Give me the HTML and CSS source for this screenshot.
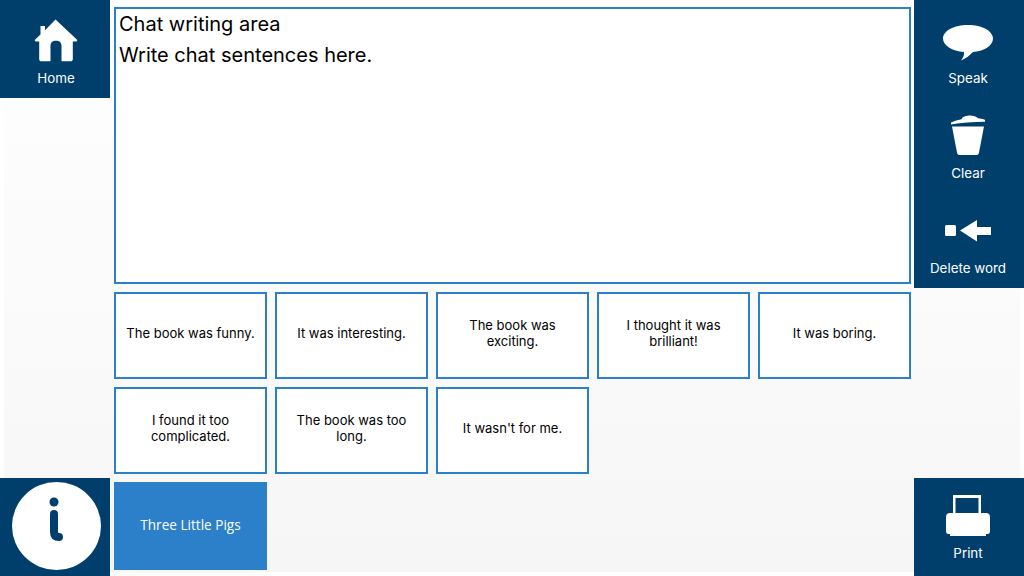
FILE: index.html
```html
<!DOCTYPE html>
<html lang="en">
<head>
<meta charset="utf-8">
<title>Chat writing area</title>
<link rel="stylesheet" href="styles.css">
</head>
<body>
<div class="app">
  <aside class="side side-left">
    <div class="tool tool-home">
      <svg class="icon" width="44" height="44" viewBox="0 0 44 44"><path fill="#fff" d="M21.500.5 42.800 20.500C43.600 21.300 43.200 22.400 42 22.400H38.800V40C38.800 41.700 38 42.300 36.500 42.300H27.500V27C27.500 23.500 25.500 21.800 22 21.800S16.500 23.500 16.500 27V42.300H7.500C6 42.300 5.200 41.700 5.200 40V22.400H2C.8 22.400.4 21.300 1.200 20.500L6.500 15.500V7H11V11.300Z"/></svg>
      <span class="tool-label">Home</span>
    </div>
    <div class="info">
      <div class="info-disc">
        <svg class="icon" width="89" height="88" viewBox="0 0 89 88"><circle cx="42" cy="20" r="4.500" fill="#003e6b"/><path d="M42 32V50Q42 55 47 55" fill="none" stroke="#003e6b" stroke-width="8" stroke-linecap="round"/></svg>
      </div>
    </div>
  </aside>
  <main class="main">
    <div class="writing">
      <p class="writing-line">Chat writing area</p>
      <p class="writing-line">Write chat sentences here.</p>
    </div>
    <div class="cards">
      <div class="card">The book was funny.</div>
      <div class="card">It was interesting.</div>
      <div class="card">The book was exciting.</div>
      <div class="card">I thought it was brilliant!</div>
      <div class="card">It was boring.</div>
      <div class="card">I found it too complicated.</div>
      <div class="card">The book was too long.</div>
      <div class="card">It wasn't for me.</div>
      <div class="card card-empty"></div>
      <div class="card card-empty"></div>
      <div class="card card-title">Three Little Pigs</div>
    </div>
  </main>
  <aside class="side side-right">
    <div class="tool-stack">
      <div class="tool tool-speak">
        <svg class="icon" width="50" height="36" viewBox="0 0 50 36"><path fill="#fff" d="M25 0C38.800 0 50 5.800 50 13.500S40 26.500 30 27C27 30 23 33.500 18 35.500 20 33 21.500 30 21 27 9 26 0 20.500 0 13.500 0 5.800 11.200 0 25 0Z"/></svg>
        <span class="tool-label">Speak</span>
      </div>
      <div class="tool tool-clear">
        <svg class="icon" width="34" height="41" viewBox="0 0 34 41"><path fill="#fff" d="M0 7.500C3.500 6 7 5 10.500 4.300 11 2.200 13.500.8 18 .5 22 .3 25 1.200 27 3.300 29.500 3.500 32 4 34 4.800V6.800C22 7 11 7.500 0 9.500ZM1 11.500H33L28 37.500C27.700 39.500 26.500 40 25 40H9C7.500 40 6.300 39.500 6 37.500Z"/></svg>
        <span class="tool-label">Clear</span>
      </div>
      <div class="tool tool-delete">
        <svg class="icon" width="46" height="22" viewBox="0 0 46 22"><rect x="0" y="5" width="11" height="11" rx="1.500" fill="#fff"/><path fill="#fff" d="M15 10.500 32 0V7H46V15H32V21.500Z"/></svg>
        <span class="tool-label">Delete word</span>
      </div>
    </div>
    <div class="tool tool-print">
      <svg class="icon" width="46" height="43" viewBox="0 0 46 43"><path fill="#fff" d="M8 0H36V18H33.500V3H10.500V18H8ZM5 18H41C43.500 18 45 19.500 45 22V36C45 38.500 44 39 41 39V41H5V39C2 39 1 38.500 1 36V22C1 19.500 2.500 18 5 18Z"/></svg>
      <span class="tool-label">Print</span>
    </div>
  </aside>
</div>
</body>
</html>
```
FILE: styles.css
```css
* { box-sizing: border-box; }
html, body { margin: 0; padding: 0; }
body {
  width: 1024px;
  height: 576px;
  overflow: hidden;
  background: #fff;
  font-family: "Inter", "Liberation Sans", sans-serif;
}
.app {
  display: grid;
  grid-template-columns: 110px 804px 110px;
  width: 1024px;
  height: 576px;
  background: linear-gradient(#ffffff, #f6f6f6) 4px 0 / 1016px 572px no-repeat;
}
.side {
  display: flex;
  flex-direction: column;
  justify-content: space-between;
  height: 576px;
}
.tool {
  display: flex;
  flex-direction: column;
  align-items: center;
  background: #003e6b;
  color: #fff;
  font-size: 13.400px;
  line-height: 17px;
}
.side-left .tool { padding-left: 2px; }
.side-right .tool { padding-right: 2px; }
.tool-label { display: block; }
.icon { display: block; }
.tool-home { height: 98px; padding-top: 19px; }
.tool-home .tool-label { margin-top: 7px; }
.tool-stack { background: #003e6b; height: 288px; }
.tool-speak { height: 98px; padding-top: 25px; }
.tool-speak .tool-label { margin-top: 9px; }
.tool-clear { height: 95px; padding-top: 17px; }
.tool-clear .tool-label { margin-top: 9px; }
.tool-delete { height: 95px; padding-top: 27px; }
.tool-delete .tool-label { margin-top: 18px; }
.tool-print { height: 98px; padding-top: 17px; }
.tool-print .tool-label { margin-top: 7px; }
.info {
  display: flex;
  align-items: center;
  justify-content: center;
  height: 98px;
  padding: 0 0 2px 3px;
  background: #003e6b;
}
.info-disc {
  width: 89px;
  height: 88px;
  border-radius: 50%;
  background: #fff;
}
.main { padding: 7px 3px 0 4px; }
.writing {
  height: 277px;
  padding: 1px 3px 0;
  background: #fff;
  border: 2px solid #2b80c9;
}
.writing-line {
  margin: 0 0 2px;
  font-size: 20px;
  line-height: 29px;
  color: #000;
}
.cards {
  display: grid;
  grid-template-columns: repeat(5, 153px);
  grid-template-rows: 87px 87px 88px;
  gap: 8px;
  margin-top: 8px;
}
.card {
  display: flex;
  align-items: center;
  justify-content: center;
  padding: 0 8px 6px;
  background: #fff;
  border: 2px solid #2b80c9;
  font-size: 13px;
  line-height: 16px;
  color: #000;
  text-align: center;
}
.card-empty { visibility: hidden; }
.card-title {
  padding-bottom: 2px;
  background: #2b80c9;
  font-family: "Open Sans", sans-serif;
  font-size: 13.600px;
  color: #fff;
}
```
